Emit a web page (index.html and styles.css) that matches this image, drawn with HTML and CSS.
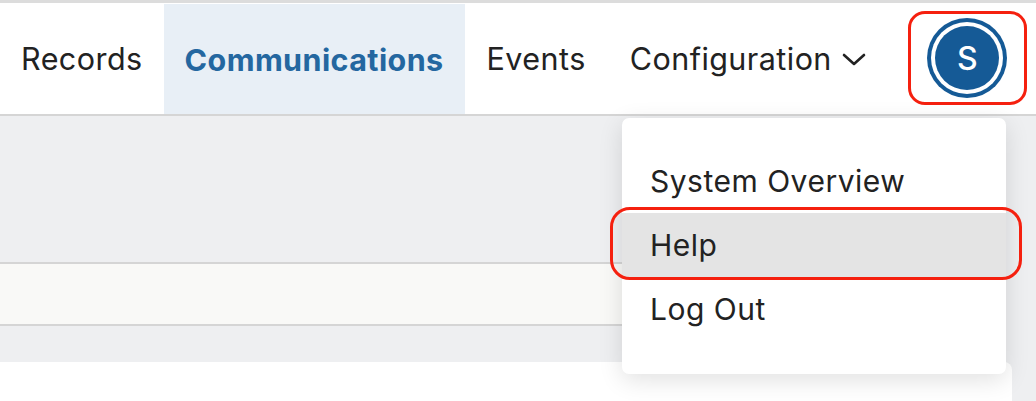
FILE: index.html
```html
<!DOCTYPE html>
<html>
<head>
<meta charset="utf-8">
<link rel="stylesheet" href="styles.css">
</head>
<body>
<div class="topline"></div>
<header class="header">
  <nav class="nav">
    <a class="nav-item">Records</a>
    <a class="nav-item active">Communications</a>
    <a class="nav-item">Events</a>
    <a class="nav-item">Configuration
      <svg class="chev" width="24" height="14" viewBox="0 0 24 14"><path d="M2 2 L12 11 L22 2" fill="none" stroke="#222" stroke-width="2.6" stroke-linecap="round" stroke-linejoin="round"/></svg>
    </a>
  </nav>
  <div class="avatar-wrap">
    <div class="avatar"><span>S</span></div>
  </div>
</header>
<main class="main">
  <div class="spacer"></div>
  <div class="strip"></div>
  <div class="spacer2"></div>
  <div class="card"></div>
  <div class="menu">
    <div class="menu-item">System Overview</div>
    <div class="menu-item hover">Help</div>
    <div class="menu-item">Log Out</div>
  </div>
</main>
</body>
</html>
```
FILE: styles.css
```css
* { box-sizing: border-box; }
html, body { margin: 0; padding: 0; }
body {
  width: 1036px;
  height: 401px;
  overflow: hidden;
  font-family: Inter, "Noto Sans", sans-serif;
  color: #222;
  background: #eeeff1;
}
.topline { height: 3px; background: #dcdcdc; }
.header {
  height: 113px;
  background: #fff;
  border-bottom: 2px solid #d5d5d5;
  display: flex;
  align-items: stretch;
}
.nav { display: flex; align-items: stretch; }
.nav-item {
  display: flex;
  align-items: center;
  padding: 0 22px 0 22px;
  font-size: 30.5px;
  letter-spacing: 0.45px;
}
.nav-item:first-child { padding-left: 21px; padding-right: 21px; }
.nav-item.active {
  background: #e8eff6;
  color: #2467a0;
  font-weight: 700;
  margin-top: 1px;
  letter-spacing: 0.4px;
  padding: 0 21px;
}
.chev { margin-left: 10px; margin-top: 2px; }
.avatar-wrap {
  margin: 8px 0 9px 20px;
  width: 119px;
  border: 3px solid #f5200f;
  border-radius: 17px;
  display: flex;
  align-items: center;
  justify-content: center;
}
.avatar {
  width: 80px;
  height: 80px;
  border-radius: 50%;
  background: #155a96;
  display: flex;
  align-items: center;
  justify-content: center;
}
.avatar span {
  width: 64px;
  height: 64px;
  border-radius: 50%;
  background: #155a96;
  box-shadow: 0 0 0 4px #fff;
  color: #fff;
  font-size: 32px;
  font-weight: 500;
  display: flex;
  align-items: center;
  justify-content: center;
}
.main { position: relative; }
.spacer { height: 146px; }
.strip {
  width: 1000px;
  height: 64px;
  background: #f9f9f7;
  border-top: 2px solid #d5d5d5;
  border-bottom: 2px solid #d5d5d5;
}
.spacer2 { height: 36px; }
.card {
  width: 1012px;
  height: 39px;
  background: #fff;
  border-top-right-radius: 8px;
}
.menu {
  position: absolute;
  left: 622px;
  top: 2px;
  width: 384px;
  height: 256px;
  background: #fff;
  border-radius: 7px;
  box-shadow: 0 6px 24px rgba(0,0,0,0.12);
  padding: 31px 0 32px;
  display: flex;
  flex-direction: column;
}
.menu-item {
  height: 64px;
  display: flex;
  align-items: center;
  padding-left: 28px;
  font-size: 30px;
  letter-spacing: 0.5px;
}
.menu-item.hover {
  background: #e4e4e4;
  position: relative;
}
.menu-item.hover::after {
  content: "";
  position: absolute;
  left: -12px;
  right: -16px;
  top: -6px;
  bottom: -3px;
  border: 3px solid #f5200f;
  border-radius: 20px;
}
```
